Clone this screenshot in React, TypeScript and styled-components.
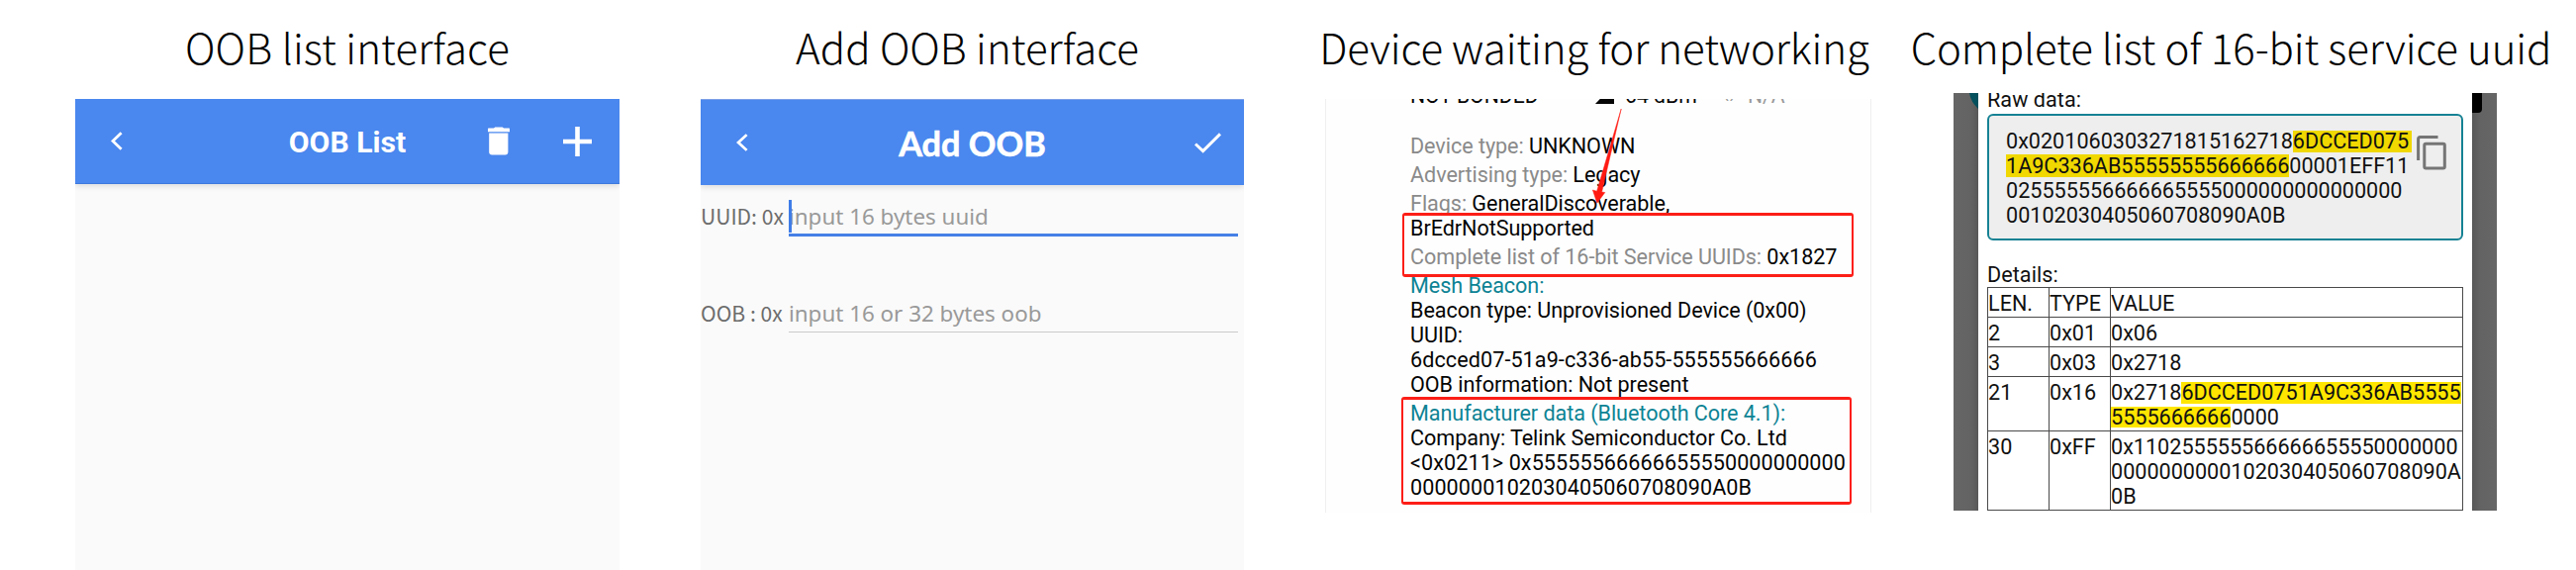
import React from "react";
import styled, { createGlobalStyle } from "styled-components";

const GlobalStyle = createGlobalStyle`
  * { box-sizing: border-box; }
  body { margin: 0; background: #fff; }
`;

const Page = styled.main`
  display: flex;
  align-items: flex-start;
  width: 2603px;
  height: 576px;
  padding-left: 76px;
  overflow: hidden;
  background: #fff;
`;

const Figure = styled.section<{ $width: number; $gap?: number }>`
  display: flex;
  flex-direction: column;
  flex: none;
  width: ${(p) => p.$width}px;
  height: 576px;
  margin-left: ${(p) => p.$gap ?? 0}px;
`;

const Caption = styled.h2<{ $height?: number; $shift?: number; $tracking?: number }>`
  display: flex;
  flex: none;
  justify-content: center;
  height: ${(p) => p.$height ?? 100}px;
  margin: 0 ${(p) => -(p.$shift ?? 0)}px 0 ${(p) => p.$shift ?? 0}px;
  font: 300 42px/94px "Noto Sans CJK SC", sans-serif;
  letter-spacing: ${(p) => p.$tracking ?? 0}px;
  white-space: nowrap;
  color: #000;
`;

/* Phone screens */

const Screen = styled.div`
  display: flex;
  flex-direction: column;
  flex: 1;
  background: #fafafa;
`;

const AppBar = styled.header<{ $height: number; $edge?: boolean }>`
  display: grid;
  grid-template-columns: 1fr auto 1fr;
  align-items: center;
  flex: none;
  height: ${(p) => p.$height}px;
  background: #4a87ee;
  border-top: ${(p) => (p.$edge ? "1px solid #7d9fe6" : "0")};
  border-bottom: ${(p) => (p.$edge ? "0" : "1px solid #3d78dc")};
  box-shadow: 0 2px 6px rgba(0, 0, 0, 0.13);
  clip-path: inset(0 0 -12px 0);
  color: #fff;
`;

const BarTitle = styled.h1<{ $font: string; $drop?: number; $stroke?: number }>`
  margin: 0;
  padding-top: ${(p) => p.$drop ?? 0}px;
  font: ${(p) => p.$font};
  -webkit-text-stroke: ${(p) => p.$stroke ?? 0}px #fff;
  white-space: nowrap;
`;

const BackSlot = styled.div<{ $left: number }>`
  display: flex;
  padding-left: ${(p) => p.$left}px;
`;

const Actions = styled.div<{ $right: number }>`
  display: flex;
  align-items: center;
  justify-content: flex-end;
  gap: 54px;
  padding-right: ${(p) => p.$right}px;
`;

const Form = styled.form`
  display: flex;
  flex-direction: column;
  gap: 50px;
  padding: 14px 6px 0 0;
`;

const FieldRow = styled.label`
  display: flex;
  align-items: flex-start;
  height: 48px;
`;

const FieldName = styled.span`
  flex: none;
  width: 89px;
  font: 400 21.1px/35px "Noto Sans CJK SC", sans-serif;
  white-space: nowrap;
  color: #6c6c6c;
`;

const FieldInput = styled.div<{ $focused?: boolean }>`
  position: relative;
  flex: 1;
  height: ${(p) => (p.$focused ? 38 : 37)}px;
  font: 400 22.4px/36px "Noto Sans", sans-serif;
  white-space: nowrap;
  color: #999;
  border-bottom: ${(p) => (p.$focused ? "3px solid #4580e6" : "1.5px solid #cacaca")};
`;

const Caret = styled.i`
  position: absolute;
  left: 0;
  top: 1px;
  width: 3px;
  height: 33px;
  background: #3f7de8;
`;

/* Scanner report */

const Report = styled.div`
  position: relative;
  display: flex;
  flex-direction: column;
  height: 418px;
  padding: 0 0 0 85px;
  overflow: hidden;
  border: solid #efefef;
  border-width: 0 1px;
  background: #fefefe;
  font: 400 21.6px/25px Roboto, sans-serif;
  color: #050505;
`;

const StatusRow = styled.div`
  display: flex;
  flex: none;
  align-items: flex-end;
  height: 9px;
  margin-bottom: 26px;
  white-space: nowrap;
  font-size: 21.2px;
`;

const StatusItem = styled.span<{ $width?: number; $muted?: boolean }>`
  width: ${(p) => (p.$width ? `${p.$width}px` : "auto")};
  color: ${(p) => (p.$muted ? "#9a9a9a" : "inherit")};
  svg { display: block; margin-bottom: 4px; }
`;

const Facts = styled.div`
  display: flex;
  flex-direction: column;
  gap: 4px;
  letter-spacing: -0.06px;
`;

const Fact = styled.p`
  margin: 0;
  white-space: nowrap;
`;

const Line = styled.span<{ $wide?: boolean }>`
  display: block;
  letter-spacing: ${(p) => (p.$wide ? "0.07px" : "inherit")};
`;

const Term = styled.span`
  color: #8a8a8a;
`;

const Heading = styled.span`
  display: block;
  color: #0d8394;
`;

const Marker = styled.div<{ $x: number; $y: number; $w: number; $h: number }>`
  position: absolute;
  left: ${(p) => p.$x}px;
  top: ${(p) => p.$y}px;
  width: ${(p) => p.$w}px;
  height: ${(p) => p.$h}px;
  border: 3px solid #fc1e17;
  border-width: 3px 2px;
  border-radius: 3px;
`;

const ArrowLayer = styled.svg`
  position: absolute;
  left: 0;
  top: 0;
`;

/* Raw data dialog */

const Backdrop = styled.div`
  position: relative;
  display: flex;
  height: 422px;
  padding: 0 25px;
  overflow: hidden;
  background: linear-gradient(90deg, #666 0, #636363 18px, #585858 25px, #585858 524px, #636363 532px, #666 549px);
`;

const CornerArt = styled.svg`
  position: absolute;
  left: 0;
  top: 0;
`;

const Dialog = styled.div`
  position: relative;
  flex: 1;
  height: 422px;
  padding: 0 9px;
  overflow: hidden;
  background: #fff;
  font: 400 21.6px/25px Roboto, sans-serif;
  color: #111;
`;

const Label = styled.div<{ $top: number }>`
  margin-top: ${(p) => p.$top}px;
  letter-spacing: 0.05px;
`;

const RawBox = styled.div`
  display: flex;
  justify-content: space-between;
  height: 128px;
  margin-top: 2px;
  padding: 13px 15px 0 17px;
  border: 2px solid #168294;
  border-radius: 6px;
  background: #eee;
  white-space: nowrap;
  svg { margin-top: 7px; }
`;

const Mark = styled.mark<{ $tone: string; $height: number; $tail?: number }>`
  display: inline-block;
  line-height: ${(p) => p.$height}px;
  padding-right: ${(p) => p.$tail ?? 0}px;
  background: ${(p) => p.$tone};
  color: inherit;
`;

const Table = styled.div`
  border: 1px solid #4a4a4a;
`;

const Row = styled.div`
  display: grid;
  grid-template-columns: 61px 62px 1fr;
  & + & { border-top: 1px solid #4a4a4a; }
`;

const Cell = styled.div`
  padding: 3px 0 1px;
  white-space: nowrap;
  & + & { border-left: 1px solid #4a4a4a; }
`;

const BackIcon = ({ height = 19 }: { height?: number }) => (
  <svg width="12" height={height} viewBox="0 0 12 19" preserveAspectRatio="none" fill="none" stroke="#fff" strokeWidth="2.8">
    <path d="M10.6 1.2 2 9.5l8.6 8.3" />
  </svg>
);

const TrashIcon = () => (
  <svg width="22" height="29" viewBox="0 0 22 29" fill="#fff">
    <path d="M0 2.2q0-.6.6-.6H6L7.2.4h7.6L16 1.600h5.400q.6 0 .6.6v3H0z" />
    <path d="M1.2 6.6h19.2v19q0 3-3 3H4.200q-3 0-3-3z" />
  </svg>
);

const PlusIcon = () => (
  <svg width="29" height="30" viewBox="0 0 29 30" fill="#fff">
    <path d="M12.2 0h4.6v12.700H29v4.6H16.8V30h-4.6V17.300H0v-4.600h12.200z" />
  </svg>
);

const CheckIcon = () => (
  <svg width="27" height="21" viewBox="0 0 27 21" fill="none" stroke="#fff" strokeWidth="3">
    <path d="M1 11.5 8.6 18.6 26 1.4" />
  </svg>
);

const CopyIcon = () => (
  <svg width="30" height="35" viewBox="0 0 30 35" fill="none" stroke="#757575" strokeWidth="3">
    <path d="M1.6 25V3.5q0-2 2-2H21.5" />
    <rect x="7.8" y="8.3" width="20.5" height="24.8" rx="1.5" />
  </svg>
);

export default function App() {
  return (
    <>
      <GlobalStyle />
      <Page>
        <Figure $width={550}>
          <Caption $tracking={0.1}>OOB list interface</Caption>
          <Screen>
            <AppBar $height={86}>
              <BackSlot $left={36}><BackIcon /></BackSlot>
              <BarTitle $font="700 30.2px/36px Roboto, sans-serif" $drop={3}>OOB List</BarTitle>
              <Actions $right={28}>
                <TrashIcon />
                <PlusIcon />
              </Actions>
            </AppBar>
          </Screen>
        </Figure>

        <Figure $width={549} $gap={82}>
          <Caption $shift={-5}>Add OOB interface</Caption>
          <Screen>
            <AppBar $height={87} $edge>
              <BackSlot $left={36}><BackIcon height={18} /></BackSlot>
              <BarTitle $font="700 34.3px/40px Lato, sans-serif" $drop={1} $stroke={0.6}>Add OOB</BarTitle>
              <Actions $right={23}><CheckIcon /></Actions>
            </AppBar>
            <Form>
              <FieldRow>
                <FieldName>UUID: 0x</FieldName>
                <FieldInput $focused>input 16 bytes uuid<Caret /></FieldInput>
              </FieldRow>
              <FieldRow>
                <FieldName>OOB : 0x</FieldName>
                <FieldInput>input 16 or 32 bytes oob</FieldInput>
              </FieldRow>
            </Form>
          </Screen>
        </Figure>

        <Figure $width={552} $gap={82}>
          <Caption $shift={-4} $tracking={-0.1}>Device waiting for networking</Caption>
          <Report>
            <StatusRow>
              <StatusItem $width={187}>NOT BONDED</StatusItem>
              <StatusItem $width={30}>
                <svg width="19" height="20" viewBox="0 0 19 20"><path d="M0 20 19 0v20z" fill="#050505" /></svg>
              </StatusItem>
              <StatusItem $width={99}>64 dBm</StatusItem>
              <StatusItem $width={25} $muted>‹›</StatusItem>
              <StatusItem $muted>N/A</StatusItem>
            </StatusRow>
            <Facts>
              <Fact><Term>Device type:</Term> UNKNOWN</Fact>
              <Fact><Term>Advertising type:</Term> Legacy</Fact>
              <Fact>
                <Line><Term>Flags:</Term> GeneralDiscoverable,</Line>
                <Line>BrEdrNotSupported</Line>
              </Fact>
              <Fact><Term>Complete list of 16-bit Service UUIDs:</Term> 0x1827</Fact>
              <Fact>
                <Heading>Mesh Beacon:</Heading>
                <Line>Beacon type: Unprovisioned Device (0x00)</Line>
                <Line>UUID:</Line>
                <Line $wide>6dcced07-51a9-c336-ab55-555555666666</Line>
                <Line>OOB information: Not present</Line>
              </Fact>
              <Fact>
                <Heading>Manufacturer data (Bluetooth Core 4.1):</Heading>
                <Line>Company: Telink Semiconductor Co. Ltd</Line>
                <Line $wide>&lt;0x0211&gt; 0x55555566666655550000000000</Line>
                <Line $wide>0000000102030405060708090A0B</Line>
              </Fact>
            </Facts>
            <Marker $x={77} $y={115} $w={456} $h={65} />
            <Marker $x={76} $y={301} $w={455} $h={109} />
            <ArrowLayer width="552" height="418" viewBox="1340 100 552 418">
              <path d="M1638.2 110 1618.6 194l3.200.5-8 10.700-4.400-13.200 4.200 1.200z" fill="#ff1a12" stroke="#ff1a12" strokeWidth="0.5" />
            </ArrowLayer>
          </Report>
        </Figure>

        <Figure $width={549} $gap={83}>
          <Caption $height={94} $shift={6} $tracking={-0.1}>Complete list of 16-bit service uuid</Caption>
          <Backdrop>
            <CornerArt width="549" height="24" viewBox="0 0 549 24">
              <path d="M16 0h9v16Q17.500 9 16 0z" fill="#04505c" />
              <path d="M524 0h10v16q0 4-4 4h-6z" fill="#000" />
            </CornerArt>
            <Dialog>
              <Label $top={-6}>Raw data:</Label>
              <RawBox>
                <div>
                  <Line>0x0201060303271815162718<Mark $tone="#f0d800" $height={22} $tail={3}>6DCCED075</Mark></Line>
                  <Line><Mark $tone="#f0d800" $height={23}>1A9C336AB55555555666666</Mark>00001EFF11</Line>
                  <Line>025555556666665555000000000000000</Line>
                  <Line>00102030405060708090A0B</Line>
                </div>
                <CopyIcon />
              </RawBox>
              <Label $top={22}>Details:</Label>
              <Table>
                <Row><Cell>LEN.</Cell><Cell>TYPE</Cell><Cell>VALUE</Cell></Row>
                <Row><Cell>2</Cell><Cell>0x01</Cell><Cell>0x06</Cell></Row>
                <Row><Cell>3</Cell><Cell>0x03</Cell><Cell>0x2718</Cell></Row>
                <Row>
                  <Cell>21</Cell>
                  <Cell>0x16</Cell>
                  <Cell>
                    <Line>0x2718<Mark $tone="#ffe600" $height={22}>6DCCED0751A9C336AB5555</Mark></Line>
                    <Line><Mark $tone="#ffe600" $height={21}>5555666666</Mark>0000</Line>
                  </Cell>
                </Row>
                <Row>
                  <Cell>30</Cell>
                  <Cell>0xFF</Cell>
                  <Cell>
                    <Line>0x110255555566666655550000000</Line>
                    <Line>0000000000102030405060708090A</Line>
                    <Line>0B</Line>
                  </Cell>
                </Row>
              </Table>
            </Dialog>
          </Backdrop>
        </Figure>
      </Page>
    </>
  );
}
